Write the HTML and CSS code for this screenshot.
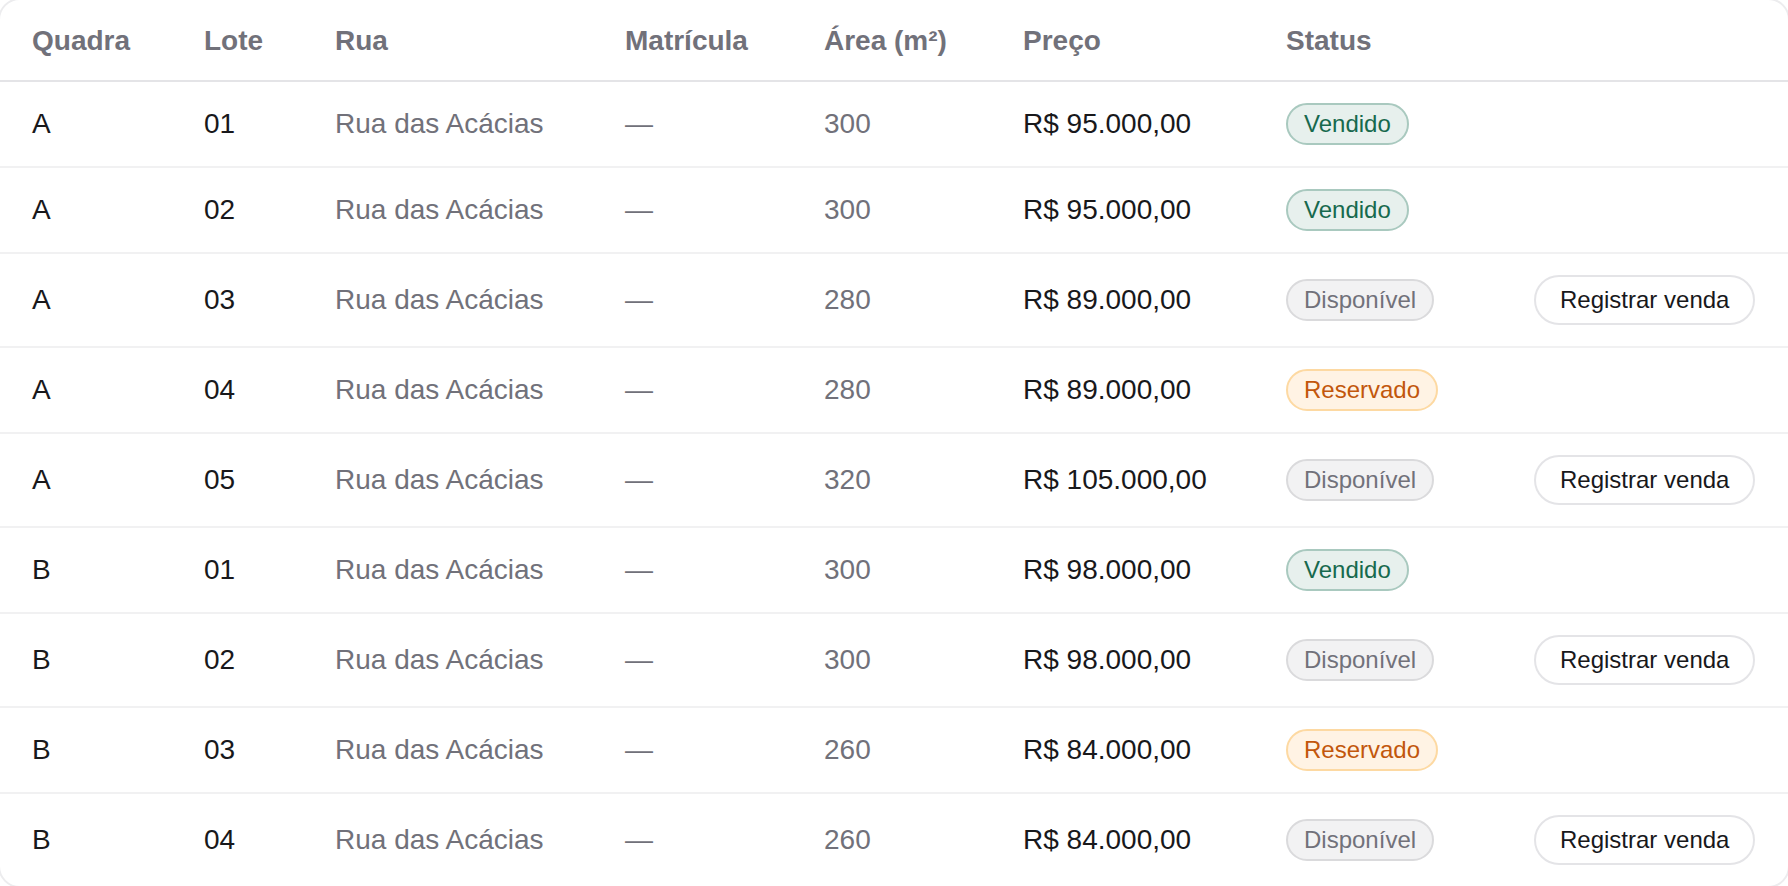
FILE: index.html
```html
<!DOCTYPE html>
<html lang="pt-BR">
<head>
    <meta charset="UTF-8">
    <meta name="viewport" content="width=device-width, initial-scale=1.0">
    <title>Lotes</title>
    <link rel="stylesheet" href="styles.css">
</head>
<body>
    <div class="card">
        <table class="lots">
            <colgroup>
                <col class="c-quadra">
                <col class="c-lote">
                <col class="c-rua">
                <col class="c-matricula">
                <col class="c-area">
                <col class="c-preco">
                <col class="c-status">
                <col class="c-action">
            </colgroup>
            <thead>
                <tr>
                    <th>Quadra</th>
                    <th>Lote</th>
                    <th>Rua</th>
                    <th>Matrícula</th>
                    <th>Área (m²)</th>
                    <th>Preço</th>
                    <th>Status</th>
                    <th></th>
                </tr>
            </thead>
            <tbody id="lotsBody">
                <!-- rows are inserted by the script below -->
            </tbody>
        </table>
    </div>

    <script>
        const lots = [
            { quadra: "A", lote: "01", area: 300, preco: "R$ 95.000,00", status: "vendido" },
            { quadra: "A", lote: "02", area: 300, preco: "R$ 95.000,00", status: "vendido" },
            { quadra: "A", lote: "03", area: 280, preco: "R$ 89.000,00", status: "disponivel" },
            { quadra: "A", lote: "04", area: 280, preco: "R$ 89.000,00", status: "reservado" },
            { quadra: "A", lote: "05", area: 320, preco: "R$ 105.000,00", status: "disponivel" },
            { quadra: "B", lote: "01", area: 300, preco: "R$ 98.000,00", status: "vendido" },
            { quadra: "B", lote: "02", area: 300, preco: "R$ 98.000,00", status: "disponivel" },
            { quadra: "B", lote: "03", area: 260, preco: "R$ 84.000,00", status: "reservado" },
            { quadra: "B", lote: "04", area: 260, preco: "R$ 84.000,00", status: "disponivel" }
        ];

        const statusLabels = {
            vendido: "Vendido",
            disponivel: "Disponível",
            reservado: "Reservado"
        };

        // Build one table row per lot
        const body = document.getElementById("lotsBody");
        lots.forEach(lot => {
            const row = document.createElement("tr");
            const action = lot.status === "disponivel"
                ? '<button class="btn-sale">Registrar venda</button>'
                : '';
            row.innerHTML = `
                <td>${lot.quadra}</td>
                <td>${lot.lote}</td>
                <td class="muted">Rua das Acácias</td>
                <td class="muted">—</td>
                <td class="muted">${lot.area}</td>
                <td>${lot.preco}</td>
                <td><span class="badge badge-${lot.status}">${statusLabels[lot.status]}</span></td>
                <td>${action}</td>
            `;
            body.appendChild(row);
        });
    </script>
</body>
</html>
```

FILE: styles.css
```css
* {
    box-sizing: border-box;
}
body {
    margin: 0;
    font-family: "Liberation Sans", Arial, sans-serif;
    background-color: #ffffff;
    color: #18181b;
}
/* the card is a bit larger than the window, so only its corners show */
.card {
    width: 1792px;
    height: 890px;
    margin: -2px;
    border: 2px solid #ececee;
    border-radius: 22px;
    overflow: hidden;
    background-color: white;
}
.lots {
    width: 100%;
    border-collapse: collapse;
    table-layout: fixed;
}
.c-quadra { width: 204px; }
.c-lote { width: 131px; }
.c-rua { width: 290px; }
.c-matricula { width: 199px; }
.c-area { width: 199px; }
.c-preco { width: 263px; }
.c-status { width: 248px; }
.lots th {
    text-align: left;
    font-size: 28px;
    font-weight: bold;
    line-height: 32px;
    color: #71717a;
    padding: 25px 0 23px;
    border-bottom: 2px solid #e4e4e7;
}
.lots td {
    font-size: 28px;
    line-height: 42px;
    padding: 21px 0;
    border-bottom: 2px solid #f1f1f2;
    white-space: nowrap;
    vertical-align: middle;
}
.lots tbody tr:last-child td {
    border-bottom: none;
}
.lots th:first-child,
.lots td:first-child {
    padding-left: 32px;
}
.lots td.muted {
    color: #71717a;
}
.badge {
    display: inline-block;
    font-size: 24px;
    line-height: 28px;
    padding: 5px 16px;
    border: 2px solid;
    border-radius: 999px;
    vertical-align: top;
}
.badge-vendido {
    background-color: #e7f0ed;
    border-color: #a9c9bf;
    color: #17694e;
}
.badge-disponivel {
    background-color: #f2f2f3;
    border-color: #dadadc;
    color: #71717a;
}
.badge-reservado {
    background-color: #fff3e4;
    border-color: #fdd9a2;
    color: #c2570c;
}
.btn-sale {
    font-family: inherit;
    font-size: 24px;
    line-height: 28px;
    padding: 9px 24px;
    border: 2px solid #e4e4e7;
    border-radius: 999px;
    background-color: white;
    color: #18181b;
    vertical-align: top;
    cursor: pointer;
}
```
